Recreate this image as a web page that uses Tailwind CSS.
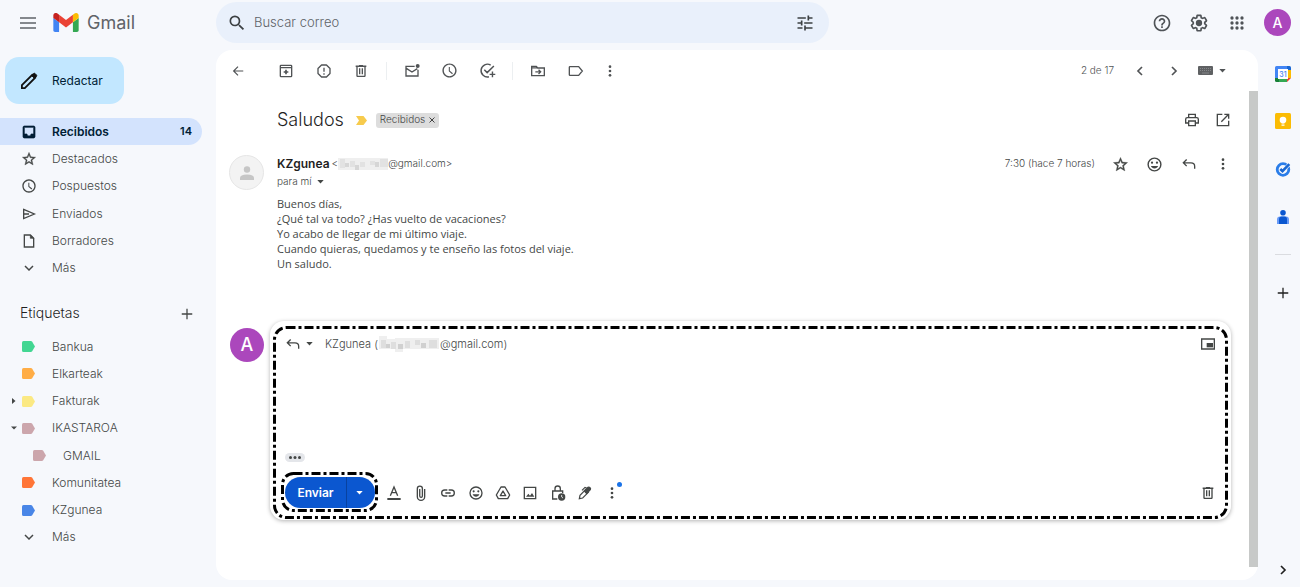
<!DOCTYPE html>
<html lang="es">
<head>
<meta charset="utf-8">
<meta name="viewport" content="width=device-width, initial-scale=1">
<title>Gmail - Saludos</title>
<script src="https://cdn.jsdelivr.net/npm/@tailwindcss/browser@4"></script>
</head>
<body class="flex min-h-screen flex-col overflow-x-hidden bg-[#f6f8fc] font-['Inter','Liberation_Sans',sans-serif] text-xs font-light text-[#444746]">

<svg class="hidden" aria-hidden="true">
  <symbol id="search" viewBox="0 0 24 24"><path d="M15.5 14h-.79l-.28-.27A6.471 6.471 0 0 0 16 9.5 6.5 6.5 0 1 0 9.5 16c1.61 0 3.09-.59 4.23-1.57l.27.28v.79l5 4.99L20.49 19l-4.99-5zm-6 0C7.01 14 5 11.99 5 9.5S7.01 5 9.5 5 14 7.01 14 9.5 11.99 14 9.5 14z"/></symbol>
  <symbol id="clock" viewBox="0 0 24 24"><path d="M11.99 2C6.47 2 2 6.48 2 12s4.47 10 9.99 10C17.52 22 22 17.52 22 12S17.52 2 11.99 2zM12 20c-4.42 0-8-3.58-8-8s3.58-8 8-8 8 3.58 8 8-3.58 8-8 8zm.5-13H11v6l4.7 4.2 1.1-1.3-4.300-3.700z"/></symbol>
  <symbol id="star" viewBox="0 0 24 24"><path d="M22 9.240l-7.190-.62L12 2 9.190 8.630 2 9.240l5.460 4.730L5.820 21 12 17.270 18.180 21l-1.630-7.030L22 9.240zM12 15.400l-3.760 2.270 1-4.280-3.320-2.880 4.380-.38L12 6.100l1.710 4.040 4.380.38-3.320 2.880 1 4.280L12 15.400z" stroke="currentColor" stroke-width=".5"/></symbol>
  <symbol id="trash" viewBox="0 0 24 24"><path d="M15 3.500V3H9v.9H4v2h1V19c0 1.100.9 2 2 2h10c1.100 0 2-.9 2-2V5.900h1v-2h-5zM17 19H7V6h10v13zM9 8h2v9H9zm4 0h2v9h-2z"/></symbol>
  <symbol id="more" viewBox="0 0 24 24"><circle cx="12" cy="5.500" r="2"/><circle cx="12" cy="12" r="2"/><circle cx="12" cy="18.500" r="2"/></symbol>
  <symbol id="smile" viewBox="0 0 24 24"><path d="M12 2a10 10 0 1 0 0 20 10 10 0 0 0 0-20zm0 18a8 8 0 1 1 0-16 8 8 0 0 1 0 16z"/><circle cx="8.500" cy="9.500" r="1.600"/><circle cx="15.500" cy="9.500" r="1.600"/><path d="M12 17.500c2.300 0 4.300-1.400 5.100-3.500H6.900c.8 2.100 2.800 3.500 5.100 3.500z"/></symbol>
  <symbol id="reply" viewBox="0 0 24 24"><path d="M8.500 5.200 3.500 10.200l5 5M4 10.200h11c3.500 0 5.500 2 5.500 5.300V19" fill="none" stroke="currentColor" stroke-width="2"/></symbol>
  <symbol id="caret" viewBox="0 0 8 5"><path d="M0 0h8L4 4.500z"/></symbol>
  <symbol id="down" viewBox="0 0 24 24"><path d="M6 9l6 6 6-6" fill="none" stroke="currentColor" stroke-width="2.200"/></symbol>
  <symbol id="right" viewBox="0 0 24 24"><path d="M9 6l6 6-6 6" fill="none" stroke="currentColor" stroke-width="2.500"/></symbol>
  <symbol id="plus" viewBox="0 0 24 24"><path d="M12 3v18M3 12h18" fill="none" stroke="currentColor" stroke-width="2.200"/></symbol>
  <symbol id="tag" viewBox="0 0 13 11"><path d="M1.500 0h7.300q.9 0 1.400.7L13 5.500l-2.800 4.800q-.5.700-1.400.7H1.500Q0 11 0 9.500v-8Q0 0 1.500 0z"/></symbol>
</svg>

<header class="flex h-[50px] items-start">
  <div class="flex h-[45px] w-[216px] shrink-0 items-center pl-5">
    <button aria-label="Menú principal" class="text-[#5f6368]"><svg class="block h-3 w-4" viewBox="0 0 16 12" fill="none" stroke="currentColor" stroke-width="1.500"><path d="M0 1h16M0 6h16M0 11h16"/></svg></button>
    <a href="#" class="ml-[17px] flex items-center gap-2 text-[#5f6368]">
      <svg class="h-[19px] w-[26px]" viewBox="52 42 88 66" aria-hidden="true"><path fill="#4285f4" d="M58 108h14V74L52 59v43c0 3.320 2.690 6 6 6"/><path fill="#34a853" d="M120 108h14c3.320 0 6-2.690 6-6V59l-20 15"/><path fill="#fbbc04" d="M120 48v26l20-15v-8c0-7.420-8.470-11.650-14.400-7.200"/><path fill="#ea4335" d="M72 74V48l24 18 24-18v26L96 92"/><path fill="#c5221f" d="M52 51v8l20 15V48l-5.600-4.400c-5.940-4.450-14.400-.22-14.400 7.200"/></svg>
      <span class="text-[18px] font-normal leading-6">Gmail</span>
    </a>
  </div>
  <form class="mt-[2px] flex h-[41px] min-w-0 max-w-[613px] flex-1 items-center rounded-full bg-[#e9f0fb] pl-[11px] pr-[14px]" onsubmit="return false">
    <button aria-label="Buscar" class="text-[#3c4043]"><svg class="block size-5" fill="currentColor"><use href="#search"/></svg></button>
    <input type="text" aria-label="Buscar correo" placeholder="Buscar correo" class="ml-[7px] min-w-0 flex-1 bg-transparent text-[13px] outline-none placeholder:text-[#5f6368]">
    <button aria-label="Opciones de búsqueda" class="text-[#3c4043]"><svg class="block size-5" viewBox="0 0 24 24" fill="currentColor"><path d="M3 17v2h6v-2H3zM3 5v2h10V5H3zm10 16v-2h8v-2h-8v-2h-2v6h2zM7 9v2H3v2h4v2h2V9H7zm14 4v-2H11v2h10zm-6-4h2V7h4V5h-4V3h-2v6z"/></svg></button>
  </form>
  <div class="ml-auto flex h-[45px] items-center pr-[9px] text-[#4f5357]">
    <button aria-label="Ayuda" class="flex w-[37px] justify-center"><svg class="size-5" viewBox="0 0 24 24" fill="currentColor"><path d="M11 18h2v-2h-2v2zm1-16C6.480 2 2 6.480 2 12s4.480 10 10 10 10-4.480 10-10S17.520 2 12 2zm0 18c-4.410 0-8-3.590-8-8s3.590-8 8-8 8 3.590 8 8-3.590 8-8 8zm0-14c-2.210 0-4 1.790-4 4h2c0-1.100.9-2 2-2s2 .9 2 2c0 2-3 1.750-3 5h2c0-2.250 3-2.500 3-5 0-2.210-1.790-4-4-4z"/></svg></button>
    <button aria-label="Configuración" class="flex w-[38px] justify-center"><svg class="size-5" viewBox="0 0 24 24" fill="currentColor"><path d="M13.850 22.250h-3.700c-.74 0-1.360-.54-1.450-1.270l-.27-1.890c-.27-.14-.53-.29-.79-.46l-1.800.72c-.7.26-1.470-.03-1.810-.65L2.200 15.530c-.35-.66-.2-1.440.36-1.880l1.530-1.190c-.01-.15-.02-.3-.02-.46 0-.15.010-.31.020-.46l-1.520-1.190c-.59-.45-.74-1.260-.37-1.880l1.850-3.190c.34-.62 1.110-.9 1.790-.63l1.810.73c.26-.17.52-.32.78-.46l.27-1.910c.09-.7.710-1.250 1.440-1.250h3.700c.74 0 1.360.54 1.450 1.270l.27 1.890c.27.14.53.29.79.46l1.800-.72c.71-.26 1.480.03 1.820.65l1.840 3.180c.36.66.2 1.440-.36 1.880l-1.520 1.190c.01.15.02.3.02.46s-.01.31-.02.46l1.520 1.190c.56.45.72 1.230.37 1.860l-1.860 3.220c-.34.62-1.110.9-1.800.63l-1.800-.72c-.26.17-.52.32-.78.46l-.27 1.910c-.1.680-.72 1.220-1.460 1.220zm-3.230-2h2.760l.37-2.550.53-.22c.44-.18.88-.44 1.340-.78l.45-.34 2.380.96 1.380-2.400-2.030-1.580.07-.56c.03-.26.06-.51.06-.78s-.03-.53-.06-.78l-.07-.56 2.030-1.580-1.390-2.400-2.390.96-.45-.35c-.42-.32-.87-.58-1.330-.77l-.52-.22-.37-2.550h-2.760l-.37 2.550-.53.21c-.44.19-.88.44-1.340.79l-.45.33-2.380-.95-1.390 2.390 2.030 1.580-.07.56a7 7 0 0 0-.06.79c0 .26.02.53.06.78l.07.56-2.030 1.580 1.380 2.400 2.390-.96.45.35c.43.33.86.58 1.330.77l.53.22.38 2.550z"/><circle cx="12" cy="12" r="3.800"/></svg></button>
    <button aria-label="Aplicaciones de Google" class="flex w-[37px] justify-center"><svg class="size-5" viewBox="0 0 24 24" fill="currentColor"><circle cx="6" cy="6" r="2"/><circle cx="12" cy="6" r="2"/><circle cx="18" cy="6" r="2"/><circle cx="6" cy="12" r="2"/><circle cx="12" cy="12" r="2"/><circle cx="18" cy="12" r="2"/><circle cx="6" cy="18" r="2"/><circle cx="12" cy="18" r="2"/><circle cx="18" cy="18" r="2"/></svg></button>
    <button aria-label="Cuenta de Google" class="ml-[9px] size-[27px] rounded-full bg-[#ab47bc] text-sm font-medium text-white">A</button>
  </div>
</header>

<div class="flex flex-1 items-stretch">
  <aside class="w-[216px] shrink-0 pt-[7px]">
    <button class="ml-[5px] flex h-[47px] w-[119px] items-center rounded-[14px] bg-[#c2e7ff] pl-[15px] font-normal text-[#001d35]">
      <svg class="h-[18px] w-[18px]" viewBox="0 0 18 18" fill="none" stroke="#111" stroke-width="1.800"><path d="M1.900 13.200 12.300 2.800l2.900 2.900L4.800 16.100H1.900z"/><path d="M11.600 3.500 13.500 1.600q.8-.7 1.600 0l1.300 1.300q.7.800 0 1.600l-1.900 1.900z" fill="#111" stroke-width="1"/></svg>
      <span class="ml-[14px]">Redactar</span>
    </button>

    <nav aria-label="Carpetas" class="mt-[14px] grid h-[164px] auto-rows-fr">
      <a href="#" class="mr-[14px] flex items-center rounded-r-full bg-[#d3e3fd] pl-[21px] pr-[10px] font-semibold text-[#001d35]">
        <svg class="mr-[15px] size-4" viewBox="0 0 24 24" fill="currentColor"><path d="M19 3H4.990c-1.110 0-1.980.89-1.980 2L3 19c0 1.100.88 2 1.990 2H19c1.100 0 2-.9 2-2V5c0-1.110-.9-2-2-2zm0 12h-4c0 1.660-1.350 3-3 3s-3-1.340-3-3H4.990V5H19v10z" stroke="currentColor"/></svg>Recibidos<span class="ml-auto text-[11px]">14</span></a>
      <a href="#" class="flex items-center pl-[21px]"><svg class="mr-[15px] size-4" fill="currentColor"><use href="#star"/></svg>Destacados</a>
      <a href="#" class="flex items-center pl-[21px]"><svg class="mr-[15px] size-4" fill="currentColor"><use href="#clock"/></svg>Pospuestos</a>
      <a href="#" class="flex items-center pl-[21px]"><svg class="mr-[15px] size-4" viewBox="0 0 24 24" fill="none" stroke="currentColor" stroke-width="2"><path d="M4 5.200 20 12 4 18.800zM4 12h8"/></svg>Enviados</a>
      <a href="#" class="flex items-center pl-[21px]"><svg class="mr-[15px] size-4" viewBox="0 0 24 24" fill="none" stroke="currentColor" stroke-width="2"><path d="M5 3h9l5 5v13H5z"/><path d="M14 3v5h5z" fill="currentColor" stroke-width="1"/></svg>Borradores</a>
      <a href="#" class="flex items-center pl-[21px]"><svg class="mr-[15px] size-4"><use href="#down"/></svg>Más</a>
    </nav>

    <div class="mt-[18px] flex h-[27px] items-center justify-between pl-5 pr-[22px] text-[#1f1f1f]">
      <h2 class="text-[14px]">Etiquetas</h2>
      <button aria-label="Crear etiqueta" class="text-[#444746]"><svg class="block size-[14px]"><use href="#plus"/></svg></button>
    </div>

    <nav aria-label="Etiquetas" class="mt-[6px] grid h-[218px] auto-rows-fr">
      <a href="#" class="flex items-center pl-[22px]"><svg class="mr-[17px] h-[11px] w-[13px]" fill="#42d692"><use href="#tag"/></svg>Bankua</a>
      <a href="#" class="flex items-center pl-[22px]"><svg class="mr-[17px] h-[11px] w-[13px]" fill="#ffad46"><use href="#tag"/></svg>Elkarteak</a>
      <a href="#" class="flex items-center pl-[10px]"><svg class="mr-[4px] size-2" viewBox="0 0 8 8" fill="currentColor"><path d="M2 1v6l3.500-3z"/></svg><svg class="mr-[17px] h-[11px] w-[13px]" fill="#fbe983"><use href="#tag"/></svg>Fakturak</a>
      <a href="#" class="flex items-center pl-[10px]"><svg class="mr-[4px] size-2" viewBox="0 0 8 8" fill="currentColor"><path d="M1 2.500h6L4 5.500z"/></svg><svg class="mr-[17px] h-[11px] w-[13px]" fill="#cca6ac"><use href="#tag"/></svg>IKASTAROA</a>
      <a href="#" class="flex items-center pl-[33px]"><svg class="mr-[17px] h-[11px] w-[13px]" fill="#cca6ac"><use href="#tag"/></svg>GMAIL</a>
      <a href="#" class="flex items-center pl-[22px]"><svg class="mr-[17px] h-[11px] w-[13px]" fill="#ff7537"><use href="#tag"/></svg>Komunitatea</a>
      <a href="#" class="flex items-center pl-[22px]"><svg class="mr-[17px] h-[11px] w-[13px]" fill="#4986e7"><use href="#tag"/></svg>KZgunea</a>
      <a href="#" class="flex items-center pl-[21px]"><svg class="mr-[15px] size-4"><use href="#down"/></svg>Más</a>
    </nav>
  </aside>

  <main class="mb-[7px] flex min-w-0 flex-1 flex-col rounded-2xl bg-white">
    <div class="flex h-[41px] shrink-0 items-center pl-[3px] pr-8 text-[#505355]">
      <button aria-label="Volver" class="flex w-[38px] justify-center"><svg class="size-[14px]" viewBox="0 0 24 24" fill="none" stroke="currentColor" stroke-width="2"><path d="M21 12H5M12 4.500 4.500 12l7.500 7.500"/></svg></button>
      <button aria-label="Archivar" class="ml-[10px] flex w-[38px] justify-center"><svg class="size-4" viewBox="0 0 24 24" fill="none" stroke="currentColor" stroke-width="2"><path d="M3.500 4.500q0-1 1-1h15q1 0 1 1v15q0 1-1 1h-15q-1 0-1-1zM3.500 7h17"/><path d="M12 10v7M8.500 13.500h7" stroke-width="2.500"/></svg></button>
      <button aria-label="Marcar como spam" class="flex w-[37px] justify-center"><svg class="size-4" viewBox="0 0 24 24" fill="none" stroke="currentColor" stroke-width="2"><path d="M8.300 3h7.400L21 8.300v7.400L15.700 21H8.300L3 15.700V8.300zM12 7v6M12 15.500v2" stroke-linejoin="round"/></svg></button>
      <button aria-label="Eliminar" class="flex w-[38px] justify-center"><svg class="size-4" fill="currentColor"><use href="#trash"/></svg></button>
      <span class="mx-[6px] h-[18px] w-px bg-[#eceff1]"></span>
      <button aria-label="Marcar como no leído" class="flex w-[38px] justify-center"><svg class="size-4" viewBox="0 0 24 24" fill="none" stroke="currentColor" stroke-width="2"><path d="M16 5H3v14.500h18V10M3.500 8 12 13.500 20 8.500"/><circle cx="20.500" cy="4.500" r="3" fill="currentColor" stroke="none"/></svg></button>
      <button aria-label="Posponer" class="flex w-[37px] justify-center"><svg class="size-[17px]" fill="currentColor"><use href="#clock"/></svg></button>
      <button aria-label="Añadir a Tareas" class="flex w-[38px] justify-center"><svg class="size-[17px]" viewBox="0 0 24 24" fill="none" stroke="currentColor" stroke-width="2"><path d="M16.500 4.300A9 9 0 1 0 14 20.800M7.500 11l4 4L21 5.500M19 13.500v8M15 17.500h8"/></svg></button>
      <span class="mx-[6px] h-[18px] w-px bg-[#eceff1]"></span>
      <button aria-label="Mover a" class="flex w-[38px] justify-center"><svg class="size-4" viewBox="0 0 24 24" fill="none" stroke="currentColor" stroke-width="2"><path d="M2.500 5h7l2 2.500h10V19h-19zM2.500 7.300h9M8 13.300h8M12.800 10l3.200 3.300-3.200 3.200"/></svg></button>
      <button aria-label="Etiquetas" class="flex w-[37px] justify-center"><svg class="size-4" viewBox="0 0 24 24" fill="none" stroke="currentColor" stroke-width="2"><path d="M3 5.500h13l5.500 6.500-5.500 6.500H3q-1 0-1-1v-11q0-1 1-1z"/></svg></button>
      <button aria-label="Más" class="flex w-[32px] justify-center"><svg class="size-4" fill="currentColor"><use href="#more"/></svg></button>
      <span class="ml-auto text-[10px]">2 de 17</span>
      <button aria-label="Más recientes" class="ml-[18px]"><svg class="block size-4 rotate-180"><use href="#right"/></svg></button>
      <button aria-label="Anteriores" class="ml-[18px]"><svg class="block size-4"><use href="#right"/></svg></button>
      <button aria-label="Herramientas de introducción de texto" class="ml-4 flex items-center gap-[6px]"><svg class="h-[9px] w-[15px]" viewBox="0 0 15 9"><rect width="15" height="9" rx="1" fill="#5f6163"/><path d="M2 2.500h11M2 4.500h11" stroke="#85878a" stroke-dasharray="1 1"/><path d="M4 7h7" stroke="#85878a"/></svg><svg class="h-1 w-[7px]" fill="currentColor"><use href="#caret"/></svg></button>
    </div>

    <div class="flex min-h-0 flex-1">
      <article class="min-w-0 flex-1">
        <div class="flex h-[58px] items-center pl-[61px] pr-[18px]">
          <h1 class="text-[18px] leading-6 text-[#1f1f1f]">Saludos</h1>
          <svg class="ml-3 h-[9px] w-[11px]" viewBox="0 0 11 9" fill="#f7cb4d" role="img" aria-label="Importante"><path d="M0 0h7.500L11 4.500 7.500 9H0l3-4.500z"/></svg>
          <span class="ml-[9px] flex h-[15px] items-center gap-[4px] rounded-[3px] bg-[#ddd] px-1 text-[10px] text-[#444]">Recibidos <button aria-label="Quitar etiqueta Recibidos"><svg class="block size-[6px]" viewBox="0 0 6 6" stroke="currentColor"><path d="m.5.5 5 5m0-5-5 5"/></svg></button></span>
          <button aria-label="Imprimir todo" class="ml-auto"><svg class="block size-4" viewBox="0 0 24 24" fill="none" stroke="currentColor" stroke-width="2"><path d="M7 8V3.500h10V8M7 16.500H2.500V11q0-2.500 2.500-2.500h14q2.500 0 2.500 2.500v5.500H17M7 13.500h10v7H7z"/></svg></button>
          <button aria-label="En una ventana nueva" class="ml-[15px]"><svg class="block size-4" viewBox="0 0 24 24" fill="none" stroke="currentColor" stroke-width="2"><path d="M11 3.500H3.500v17h17V13M14 3.500h6.500V10M20.500 3.500 9.500 14.500"/></svg></button>
        </div>

        <div class="flex pl-[13px] pr-[18px]">
          <div class="mt-[6px] flex size-[35px] shrink-0 items-center justify-center rounded-full border border-[#e6e6e6] bg-[#f3f3f3]"><svg class="size-[14px]" viewBox="0 0 14 14" fill="#c6c6c6"><circle cx="7" cy="3.500" r="3.200"/><path d="M0 14v-2q0-3.500 7-3.500t7 3.500v2z"/></svg></div>
          <div class="ml-[13px] min-w-0 flex-1">
            <div class="flex h-[30px] items-center">
              <strong class="text-xs font-semibold text-[#1f1f1f]">KZgunea</strong>
              <span class="ml-[2px] flex items-center text-[10px]">&lt;<svg class="h-3 w-[50px]" viewBox="0 0 50 12" role="img" aria-label="dirección oculta"><path fill="#efefef" d="M0 0h50v12H0z"/><path fill="#e2e2e2" d="M2 1h5v9H2zM12 3h5v6h-5zM22 4h5v5h-5zM32 3h5v4h-5zM42 1h8v8h-8z"/><path fill="#d6d6d6" d="M7 5h4v4H7zM17 7h4v5h-4zM37 4h4v5h-4z"/></svg>@gmail.com&gt;</span>
              <time class="ml-auto text-[10px]">7:30 (hace 7 horas)</time>
              <button aria-label="Destacar" class="ml-[17px]"><svg class="block size-[17px]" fill="currentColor"><use href="#star"/></svg></button>
              <button aria-label="Añadir reacción" class="ml-[17px]"><svg class="block size-[17px]" fill="currentColor"><use href="#smile"/></svg></button>
              <button aria-label="Responder" class="ml-[18px]"><svg class="block size-4"><use href="#reply"/></svg></button>
              <button aria-label="Más opciones" class="ml-[18px]"><svg class="block size-4" fill="currentColor"><use href="#more"/></svg></button>
            </div>
            <button class="flex h-[5px] items-center text-[10px]">para mí <svg class="ml-[5px] h-1 w-[7px]" fill="currentColor"><use href="#caret"/></svg></button>
            <p class="mt-[12px] font-['Open_Sans','Noto_Sans',sans-serif] text-[11px] leading-[15px] font-normal">Buenos días,<br>¿Qué tal va todo? ¿Has vuelto de vacaciones?<br>Yo acabo de llegar de mi último viaje.<br>Cuando quieras, quedamos y te enseño las fotos del viaje.<br>Un saludo.</p>
          </div>
        </div>

        <div class="mt-[50px] flex pl-[14px] pr-[18px]">
          <div class="mt-[7px] flex size-[34px] shrink-0 items-center justify-center rounded-full bg-[#ab47bc] text-lg font-medium text-white">A</div>
          <form class="relative ml-[6px] flex min-w-0 flex-1 flex-col rounded-[14px] bg-white px-[15px] pb-[12px] shadow-[0_1px_4px_rgba(0,0,0,0.3)]" onsubmit="return false">
            <svg class="pointer-events-none absolute top-[5px] left-[3px] h-[194px] w-[calc(100%-6px)]" fill="none" stroke="#000" stroke-width="3" aria-hidden="true"><rect class="h-[190px] w-[calc(100%-3px)]" x="1.500" y="1.500" rx="12" stroke-dasharray="9 3 3 3"/></svg>
            <div class="mt-[11px] flex h-6 items-center">
              <button type="button" aria-label="Tipo de respuesta" class="flex items-center gap-[5px]"><svg class="size-4"><use href="#reply"/></svg><svg class="h-1 w-[7px]" fill="currentColor"><use href="#caret"/></svg></button>
              <span class="ml-3 flex items-center text-[11px]">KZgunea (<svg class="h-4 w-[62px]" viewBox="0 0 60 16" role="img" aria-label="dirección oculta"><path fill="#efefef" d="M0 0h8v3h8v-1h44v11H24v3h-8v-3H0z"/><path fill="#dedede" d="M2 4h5v8H2zM12 6h5v7h-5zM26 5h5v7h-5zM36 4h5v5h-5zM50 4h8v8h-8z"/><path fill="#d0d0d0" d="M7 8h4v4H7zM19 8h5v5h-5zM42 7h5v5h-5z"/></svg>@gmail.com)</span>
              <button type="button" aria-label="Respuesta emergente" class="ml-auto"><svg class="block size-4" viewBox="0 0 24 24" fill="none" stroke="currentColor" stroke-width="2"><path d="M2.500 4.500h19v15h-19z"/><path d="M10 10.500h9.500v6.500H10z" fill="currentColor" stroke="none"/></svg></button>
            </div>
            <textarea aria-label="Cuerpo del mensaje" class="h-[97px] resize-none bg-transparent text-xs outline-none"></textarea>
            <button type="button" aria-label="Mostrar contenido acortado" class="flex h-[9px] w-5 items-center justify-center rounded-full bg-[#e4e6ea]"><svg class="h-[3px] w-3" viewBox="0 0 12 3" fill="#444746"><circle cx="1.500" cy="1.500" r="1.500"/><circle cx="6" cy="1.500" r="1.500"/><circle cx="10.500" cy="1.500" r="1.500"/></svg></button>
            <div class="mt-[15px] flex h-[31px] items-center">
              <div class="relative flex h-[31px] w-[90px] rounded-full bg-[#0b57d0] text-white">
                <svg class="pointer-events-none absolute -top-[5px] -left-[4px] h-[41px] w-[98px]" fill="none" stroke="#000" stroke-width="3" aria-hidden="true"><rect x="1.500" y="1.500" width="94" height="37" rx="11" stroke-dasharray="9 3 3 3"/></svg>
                <button type="submit" class="w-[62px] border-r border-[#0842a0] text-xs font-semibold">Enviar</button>
                <button type="button" aria-label="Más opciones de envío" class="flex flex-1 items-center justify-center pr-[3px]"><svg class="h-1 w-[7px]" fill="currentColor"><use href="#caret"/></svg></button>
              </div>
              <div class="ml-[5px] flex w-[246px] items-center">
                <button type="button" aria-label="Opciones de formato" class="flex flex-1 justify-center"><svg class="size-4" viewBox="0 0 24 24" fill="none" stroke="currentColor" stroke-width="2"><path d="M6.500 16 12 3l5.500 13M8.500 11.500h7"/><path d="M2 21h20" stroke-width="3"/></svg></button>
                <button type="button" aria-label="Adjuntar archivos" class="flex flex-1 justify-center"><svg class="size-4" viewBox="0 0 24 24" fill="none" stroke="currentColor" stroke-width="2"><path d="M17.500 6v11.500a5.500 5.500 0 0 1-11 0V5.500a3.800 3.800 0 0 1 7.600 0V16.500a2 2 0 0 1-4 0V6"/></svg></button>
                <button type="button" aria-label="Insertar enlace" class="flex flex-1 justify-center"><svg class="size-4" viewBox="0 0 24 24" fill="none" stroke="currentColor" stroke-width="2"><path d="M11 7.500H7a4.500 4.500 0 0 0 0 9h4M13 7.500h4a4.500 4.500 0 0 1 0 9h-4M8 12h8"/></svg></button>
                <button type="button" aria-label="Insertar emoji" class="flex flex-1 justify-center"><svg class="size-4" fill="currentColor"><use href="#smile"/></svg></button>
                <button type="button" aria-label="Insertar archivos con Drive" class="flex flex-1 justify-center"><svg class="size-4" viewBox="0 0 24 24" fill="none" stroke="currentColor" stroke-width="2" stroke-linejoin="round"><path d="M9 3h6l7 12-3 5.500H5L2 15zM12 9l-4 7h8z"/></svg></button>
                <button type="button" aria-label="Insertar foto" class="flex flex-1 justify-center"><svg class="size-4" viewBox="0 0 24 24" fill="none" stroke="currentColor" stroke-width="2"><path d="M3.500 3.500h17v17h-17z"/><path d="M6 17.500l3.500-4.500 2.500 3 3-4 3.500 5.500z" fill="currentColor" stroke="none"/></svg></button>
                <button type="button" aria-label="Modo confidencial" class="flex flex-1 justify-center"><svg class="size-4" viewBox="0 0 24 24" fill="none" stroke="currentColor" stroke-width="2"><path d="M11 21H4V9h15v3M7.500 9V5.500a4 4 0 0 1 8 0V9"/><circle cx="17.500" cy="18" r="5.500" fill="currentColor" stroke="none"/><path d="M17.500 15v3l2 1.500" stroke="#fff" stroke-width="1.200"/></svg></button>
                <button type="button" aria-label="Insertar firma" class="flex flex-1 justify-center"><svg class="size-4" viewBox="0 0 24 24" fill="none" stroke="currentColor" stroke-width="1.800"><path d="M3.500 20.500l1-5L13 7l4 4-8.500 8.500z"/><path d="M11 9l5.500-5.500q1.500-1 3 .5t.5 3L14.500 13z" fill="currentColor"/><path d="M14.500 4.500 12 3.500 7.500 8"/></svg></button>
                <button type="button" aria-label="Más opciones" class="relative flex flex-1 justify-center"><svg class="size-4" fill="currentColor"><use href="#more"/></svg><span class="absolute -top-[3px] right-[4px] size-[5px] rounded-full bg-[#1a73e8]"></span></button>
              </div>
              <button type="button" aria-label="Descartar borrador" class="ml-auto"><svg class="block size-4" fill="currentColor"><use href="#trash"/></svg></button>
            </div>
          </form>
        </div>
      </article>
      <div class="mb-[13px] w-[9px] shrink-0 bg-[#c7c9c8]"></div>
    </div>
  </main>

  <aside aria-label="Panel lateral" class="flex w-[42px] shrink-0 flex-col items-center pt-4 pl-[7px] pb-[9px]">
    <button aria-label="Calendar"><svg class="block size-4" viewBox="0 0 16 16"><path fill="#4285f4" d="M1.500 0H12v4H4v8H0V1.500Q0 0 1.500 0z"/><path fill="#1967d2" d="M12 0h2.500Q16 0 16 1.500V4h-4z"/><path fill="#fbbc04" d="M12 4h4v8h-4z"/><path fill="#188038" d="M0 12h4v4H1.500Q0 16 0 14.500z"/><path fill="#34a853" d="M4 12h8v4H4z"/><path fill="#ea4335" d="M12 12h4l-4 4z"/><path fill="#fff" d="M3 3h10v10H3z"/><text x="8" y="10.500" text-anchor="middle" font-size="7" font-weight="500" fill="#4285f4">31</text></svg></button>
    <button aria-label="Keep" class="mt-[31px]"><svg class="block size-4" viewBox="0 0 16 16"><rect width="16" height="16" rx="1.500" fill="#fbbc04"/><circle cx="8" cy="7" r="3.300" fill="#fff"/><path fill="#fff" d="M6.500 9h3v1.500h-3zM6.500 11.500h3v1.300h-3z"/></svg></button>
    <button aria-label="Tasks" class="mt-8"><svg class="block size-4" viewBox="0 0 16 16" fill="none"><circle cx="8" cy="8.500" r="5.800" stroke="#2a7de9" stroke-width="2.800"/><path d="M5.300 8 7.500 10.200 14.300 3.200" stroke="#f6f8fc" stroke-width="3.600"/><path d="M5.300 8 7.500 10.200 14.300 3.200" stroke="#1967d2" stroke-width="2.600"/></svg></button>
    <button aria-label="Contactos" class="mt-8"><svg class="block size-4" viewBox="0 0 16 16"><circle cx="8" cy="3.700" r="2.800" fill="#0b57d0"/><path fill="#699bf7" d="M5 7.500h6q3 0 3 3V15H2v-4.500q0-3 3-3z"/><path fill="#0b57d0" d="M6.500 7.500h3q2.500 0 2.500 3V15H4v-4.500q0-3 2.500-3z"/></svg></button>
    <span class="mt-[29px] h-px w-4 bg-[#dadce0]"></span>
    <button aria-label="Obtener complementos" class="mt-[31px] text-[#1f1f1f]"><svg class="block size-[14px]"><use href="#plus"/></svg></button>
    <button aria-label="Ocultar panel lateral" class="mt-auto text-[#1f1f1f]"><svg class="block size-4"><use href="#right"/></svg></button>
  </aside>
</div>
</body>
</html>
